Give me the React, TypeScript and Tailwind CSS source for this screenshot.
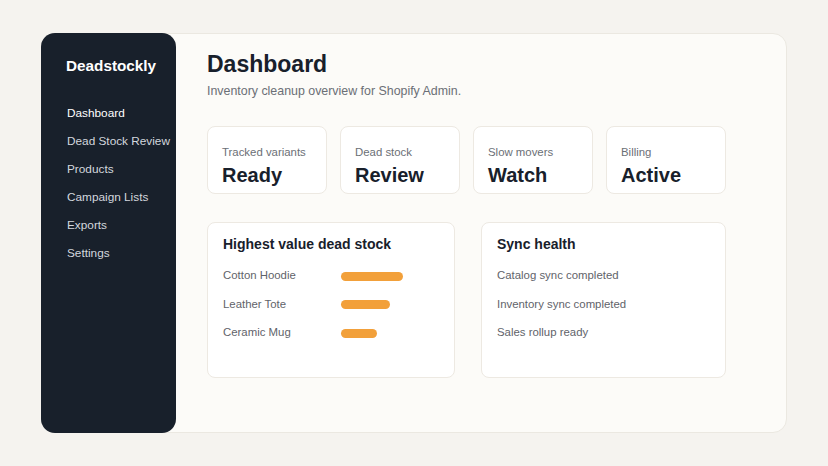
const nav = ["Dashboard", "Dead Stock Review", "Products", "Campaign Lists", "Exports", "Settings"];

const stats = [
  { label: "Tracked variants", value: "Ready" },
  { label: "Dead stock", value: "Review" },
  { label: "Slow movers", value: "Watch" },
  { label: "Billing", value: "Active" },
];

const deadStock = [
  { name: "Cotton Hoodie", width: 62 },
  { name: "Leather Tote", width: 49 },
  { name: "Ceramic Mug", width: 36 },
];

const syncItems = ["Catalog sync completed", "Inventory sync completed", "Sales rollup ready"];

export default function App() {
  return (
    <div
      className="min-h-[466px] w-[828px] bg-[#f5f3ef] pt-[33px] pl-[41px]"
      style={{ fontFamily: '"Liberation Sans", Arial, sans-serif' }}
    >
      <div className="flex h-[400px] w-[746px] rounded-[14px] border border-[#ebe8e1] bg-[#fcfbf8]">
        {/* Sidebar */}
        <aside className="-m-px flex h-[400px] w-[135px] shrink-0 flex-col rounded-[14px] bg-[#18202b] pl-[25px] pt-[23px]">
          <div className="text-[15.3px] font-bold leading-5 text-white">Deadstockly</div>
          <nav className="mt-[27px] flex flex-col gap-[8px] pl-px">
            {nav.map((item, i) => (
              <div
                key={item}
                className={`whitespace-nowrap text-[11.8px] leading-5 ${i === 0 ? "text-white" : "text-[#d3d7de]"}`}
              >
                {item}
              </div>
            ))}
          </nav>
        </aside>

        {/* Main */}
        <main className="pl-[32px] pt-[16px]">
          <h1 className="text-[23px] font-bold leading-7 text-[#18202b]">Dashboard</h1>
          <p className="mt-[5px] text-[12.4px] leading-4 text-[#6b6f76]">
            Inventory cleanup overview for Shopify Admin.
          </p>

          <div className="mt-[27px] flex gap-[13px]">
            {stats.map((s) => (
              <div
                key={s.label}
                className="h-[68px] w-[120px] rounded-[8px] border border-[#ede9e2] bg-white pl-[14px] pt-[17px]"
              >
                <div className="text-[11.4px] leading-4 text-[#6b6f76]">{s.label}</div>
                <div className="mt-[3px] text-[20px] font-bold leading-6 text-[#18202b]">{s.value}</div>
              </div>
            ))}
          </div>

          <div className="mt-[28px] flex gap-[26px]">
            <div className="h-[156px] w-[248px] rounded-[8px] border border-[#ede9e2] bg-white pl-[15px] pt-[11px]">
              <h2 className="text-[14px] font-bold leading-5 text-[#18202b]">Highest value dead stock</h2>
              <div className="mt-[13px] flex flex-col gap-[10.5px]">
                {deadStock.map((d) => (
                  <div key={d.name} className="flex h-[18px] items-center">
                    <span className="w-[118px] text-[11.4px] text-[#5f636a]">{d.name}</span>
                    <span className="h-[9px] rounded-full bg-[#f2a03a]" style={{ width: d.width }} />
                  </div>
                ))}
              </div>
            </div>

            <div className="h-[156px] w-[245px] rounded-[8px] border border-[#ede9e2] bg-white pl-[15px] pt-[11px]">
              <h2 className="text-[14px] font-bold leading-5 text-[#18202b]">Sync health</h2>
              <div className="mt-[13px] flex flex-col gap-[10.5px]">
                {syncItems.map((s) => (
                  <div key={s} className="flex h-[18px] items-center text-[11.4px] text-[#5f636a]">
                    {s}
                  </div>
                ))}
              </div>
            </div>
          </div>
        </main>
      </div>
    </div>
  );
}
